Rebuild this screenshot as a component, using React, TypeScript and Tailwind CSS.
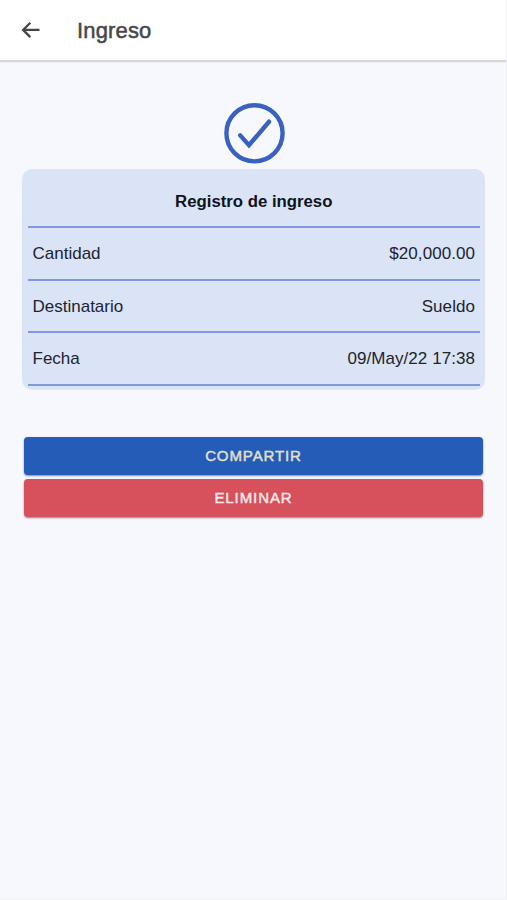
const rows = [
  { label: "Cantidad", value: "$20,000.00" },
  { label: "Destinatario", value: "Sueldo" },
  { label: "Fecha", value: "09/May/22 17:38" },
];

function BackIcon() {
  return (
    <svg width="20" height="18" viewBox="0 0 20 18" fill="none" stroke="#474747" strokeWidth="2.3">
      <path d="M10.3 1.7 3.1 8.9l7.2 7.2M3.1 8.9h16.4" />
    </svg>
  );
}

function CheckIcon() {
  return (
    <svg
      width="62"
      height="62"
      viewBox="0 0 62 62"
      fill="none"
      stroke="#3a60c0"
      strokeWidth="4.4"
      strokeLinecap="round"
    >
      <circle cx="31.5" cy="31.3" r="28.1" />
      <path d="M17.2 33.4 26 43.2 46 19.7" />
    </svg>
  );
}

export default function App() {
  return (
    <div className="flex h-[900px] w-full flex-col border-r border-b border-[#f0f1f5] bg-[#f6f8fe] font-['Liberation_Sans',Arial,sans-serif]">
      <header className="flex h-[62px] shrink-0 items-center border-b-2 border-[#d5d6d9] bg-white pl-5 shadow-[0_1px_1px_rgba(0,0,0,0.04)]">
        <button type="button" aria-label="Volver">
          <BackIcon />
        </button>
        <h1 className="ml-[37px] pt-[2px] text-[22px] leading-7 tracking-[0.15px] text-[#474747] [-webkit-text-stroke:0.5px_#474747]">
          Ingreso
        </h1>
      </header>

      <main className="flex flex-col pt-10 pr-[21px] pl-[22px]">
        <div className="flex h-[67px] justify-center pl-[1px]">
          <CheckIcon />
        </div>

        <section className="h-[221px] rounded-[10px] bg-[#dbe3f6] pr-[5px] pl-[5.5px]">
          <h2 className="flex h-[59px] items-center justify-center border-b-2 border-[#8199da] pt-[8px] text-[16.75px] font-bold text-[#10131a]">
            Registro de ingreso
          </h2>
          {rows.map((row) => (
            <div
              key={row.label}
              className="flex h-[52.5px] items-center justify-between border-b-2 border-[#8199da] px-[5px] pt-[1px] text-[17px] text-[#20242f]"
            >
              <span>{row.label}</span>
              <span className="tracking-[0.06px]">{row.value}</span>
            </div>
          ))}
        </section>

        <div className="mt-[47px] flex flex-col gap-1 px-[2px]">
          <button
            type="button"
            className="h-[38px] rounded-[4px] bg-[#255cb8] text-[15px] tracking-[0.9px] text-[#e3e0cc] shadow-[0_1px_2px_rgba(0,0,0,0.45)] [-webkit-text-stroke:0.45px_#e3e0cc]"
          >
            COMPARTIR
          </button>
          <button
            type="button"
            className="h-[38px] rounded-[4px] bg-[#d7515d] text-[15px] tracking-[0.9px] text-[#fbe9ea] shadow-[0_1px_2px_rgba(0,0,0,0.45)] [-webkit-text-stroke:0.45px_#fbe9ea]"
          >
            ELIMINAR
          </button>
        </div>
      </main>
    </div>
  );
}
